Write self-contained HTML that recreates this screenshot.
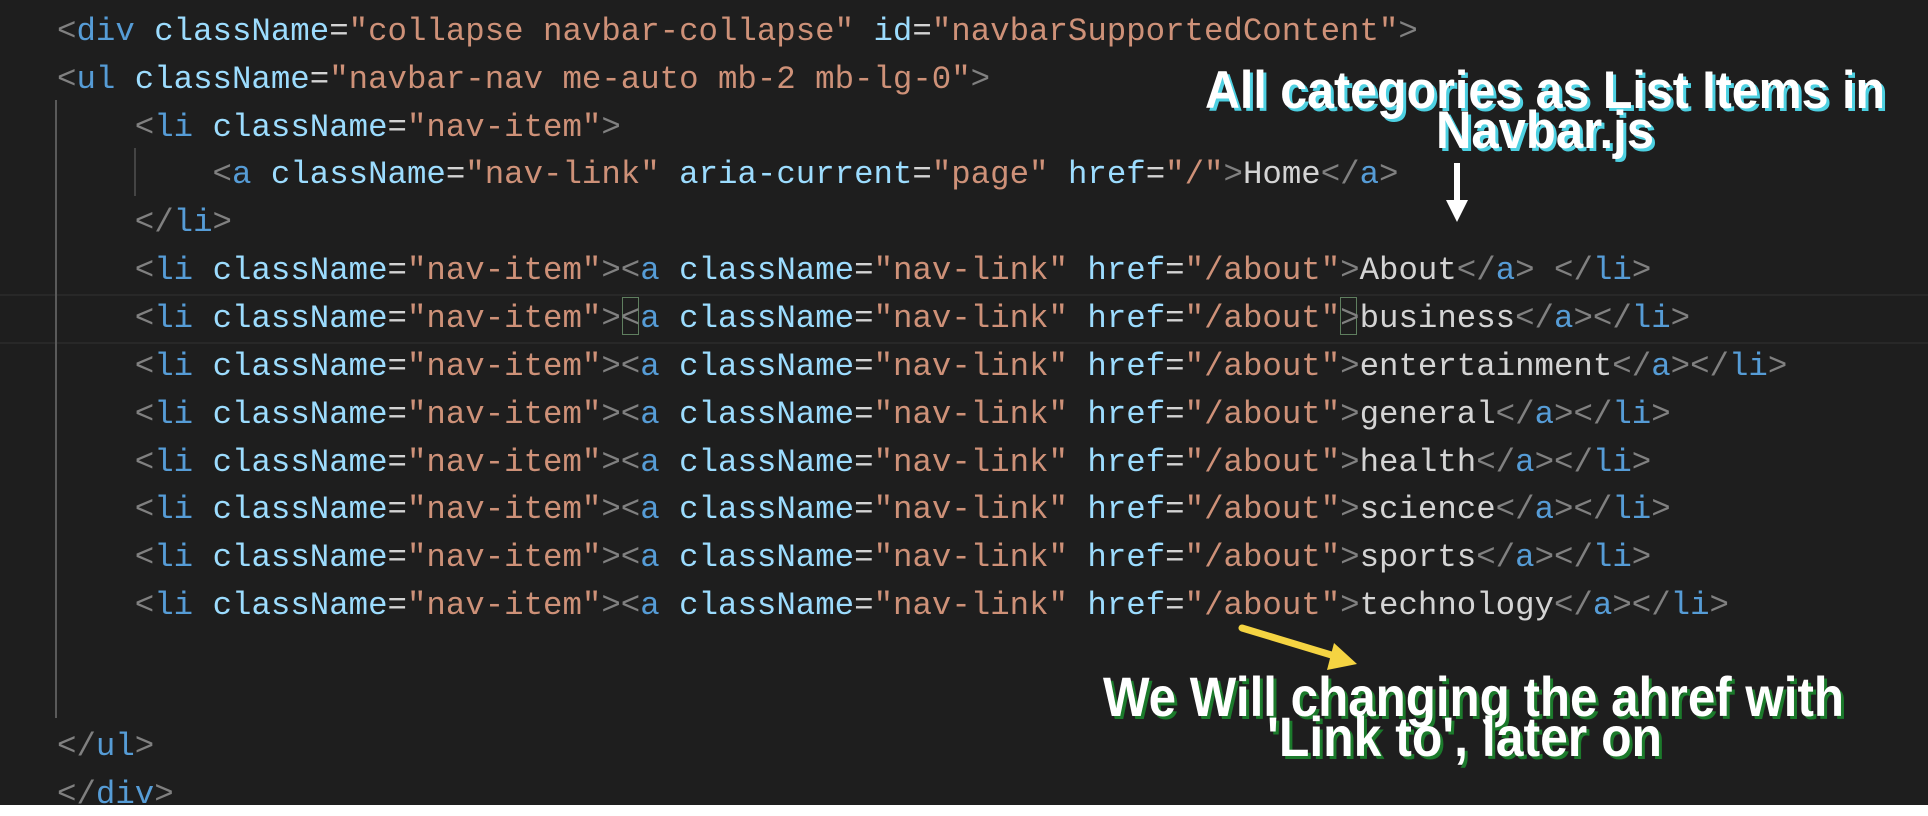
<!DOCTYPE html>
<html><head><meta charset="utf-8"><style>
html,body{margin:0;padding:0}
body{width:1928px;height:816px;background:#fff;position:relative;overflow:hidden}
#ed{position:absolute;left:0;top:0;width:1928px;height:805px;background:#1e1e1e;overflow:hidden}
.l{position:absolute;left:57px;height:48px;line-height:48px;font-family:"Liberation Mono",monospace;font-size:32.4px;white-space:pre;color:#d4d4d4;letter-spacing:0px}
.p{color:#808080}.t{color:#569cd6}.a{color:#9cdcfe}.s{color:#ce9178}.x{color:#d4d4d4}
.g{position:absolute;width:2px;background:#5a5a5a}
.cur{position:absolute;left:0;width:1928px;height:46px;border-top:2px solid #282828;border-bottom:2px solid #282828}
.bx{position:absolute;width:17px;height:38px;border:1px solid #5f7f5f;box-sizing:border-box}
svg{position:absolute;left:0;top:0}
</style></head><body>
<div id="ed">
<div class="cur" style="top:294px"></div>
<div class="g" style="left:55px;top:100px;height:618px"></div>
<div class="g" style="left:134px;top:148px;height:48px;background:#444"></div>
<div class="bx" style="left:622px;top:297px"></div>
<div class="bx" style="left:1340px;top:297px"></div>
<div class="l" style="top:8px"><span class="p">&lt;</span><span class="t">div</span> <span class="a">className</span><span class="x">=</span><span class="s">"collapse navbar-collapse"</span> <span class="a">id</span><span class="x">=</span><span class="s">"navbarSupportedContent"</span><span class="p">&gt;</span></div>
<div class="l" style="top:56px"><span class="p">&lt;</span><span class="t">ul</span> <span class="a">className</span><span class="x">=</span><span class="s">"navbar-nav me-auto mb-2 mb-lg-0"</span><span class="p">&gt;</span></div>
<div class="l" style="top:104px">    <span class="p">&lt;</span><span class="t">li</span> <span class="a">className</span><span class="x">=</span><span class="s">"nav-item"</span><span class="p">&gt;</span></div>
<div class="l" style="top:151px">        <span class="p">&lt;</span><span class="t">a</span> <span class="a">className</span><span class="x">=</span><span class="s">"nav-link"</span> <span class="a">aria-current</span><span class="x">=</span><span class="s">"page"</span> <span class="a">href</span><span class="x">=</span><span class="s">"/"</span><span class="p">&gt;</span>Home<span class="p">&lt;/</span><span class="t">a</span><span class="p">&gt;</span></div>
<div class="l" style="top:199px">    <span class="p">&lt;/</span><span class="t">li</span><span class="p">&gt;</span></div>
<div class="l" style="top:247px">    <span class="p">&lt;</span><span class="t">li</span> <span class="a">className</span><span class="x">=</span><span class="s">"nav-item"</span><span class="p">&gt;&lt;</span><span class="t">a</span> <span class="a">className</span><span class="x">=</span><span class="s">"nav-link"</span> <span class="a">href</span><span class="x">=</span><span class="s">"/about"</span><span class="p">&gt;</span>About<span class="p">&lt;/</span><span class="t">a</span><span class="p">&gt;</span> <span class="p">&lt;/</span><span class="t">li</span><span class="p">&gt;</span></div>
<div class="l" style="top:295px">    <span class="p">&lt;</span><span class="t">li</span> <span class="a">className</span><span class="x">=</span><span class="s">"nav-item"</span><span class="p">&gt;&lt;</span><span class="t">a</span> <span class="a">className</span><span class="x">=</span><span class="s">"nav-link"</span> <span class="a">href</span><span class="x">=</span><span class="s">"/about"</span><span class="p">&gt;</span>business<span class="p">&lt;/</span><span class="t">a</span><span class="p">&gt;&lt;/</span><span class="t">li</span><span class="p">&gt;</span></div>
<div class="l" style="top:343px">    <span class="p">&lt;</span><span class="t">li</span> <span class="a">className</span><span class="x">=</span><span class="s">"nav-item"</span><span class="p">&gt;&lt;</span><span class="t">a</span> <span class="a">className</span><span class="x">=</span><span class="s">"nav-link"</span> <span class="a">href</span><span class="x">=</span><span class="s">"/about"</span><span class="p">&gt;</span>entertainment<span class="p">&lt;/</span><span class="t">a</span><span class="p">&gt;&lt;/</span><span class="t">li</span><span class="p">&gt;</span></div>
<div class="l" style="top:391px">    <span class="p">&lt;</span><span class="t">li</span> <span class="a">className</span><span class="x">=</span><span class="s">"nav-item"</span><span class="p">&gt;&lt;</span><span class="t">a</span> <span class="a">className</span><span class="x">=</span><span class="s">"nav-link"</span> <span class="a">href</span><span class="x">=</span><span class="s">"/about"</span><span class="p">&gt;</span>general<span class="p">&lt;/</span><span class="t">a</span><span class="p">&gt;&lt;/</span><span class="t">li</span><span class="p">&gt;</span></div>
<div class="l" style="top:439px">    <span class="p">&lt;</span><span class="t">li</span> <span class="a">className</span><span class="x">=</span><span class="s">"nav-item"</span><span class="p">&gt;&lt;</span><span class="t">a</span> <span class="a">className</span><span class="x">=</span><span class="s">"nav-link"</span> <span class="a">href</span><span class="x">=</span><span class="s">"/about"</span><span class="p">&gt;</span>health<span class="p">&lt;/</span><span class="t">a</span><span class="p">&gt;&lt;/</span><span class="t">li</span><span class="p">&gt;</span></div>
<div class="l" style="top:486px">    <span class="p">&lt;</span><span class="t">li</span> <span class="a">className</span><span class="x">=</span><span class="s">"nav-item"</span><span class="p">&gt;&lt;</span><span class="t">a</span> <span class="a">className</span><span class="x">=</span><span class="s">"nav-link"</span> <span class="a">href</span><span class="x">=</span><span class="s">"/about"</span><span class="p">&gt;</span>science<span class="p">&lt;/</span><span class="t">a</span><span class="p">&gt;&lt;/</span><span class="t">li</span><span class="p">&gt;</span></div>
<div class="l" style="top:534px">    <span class="p">&lt;</span><span class="t">li</span> <span class="a">className</span><span class="x">=</span><span class="s">"nav-item"</span><span class="p">&gt;&lt;</span><span class="t">a</span> <span class="a">className</span><span class="x">=</span><span class="s">"nav-link"</span> <span class="a">href</span><span class="x">=</span><span class="s">"/about"</span><span class="p">&gt;</span>sports<span class="p">&lt;/</span><span class="t">a</span><span class="p">&gt;&lt;/</span><span class="t">li</span><span class="p">&gt;</span></div>
<div class="l" style="top:582px">    <span class="p">&lt;</span><span class="t">li</span> <span class="a">className</span><span class="x">=</span><span class="s">"nav-item"</span><span class="p">&gt;&lt;</span><span class="t">a</span> <span class="a">className</span><span class="x">=</span><span class="s">"nav-link"</span> <span class="a">href</span><span class="x">=</span><span class="s">"/about"</span><span class="p">&gt;</span>technology<span class="p">&lt;/</span><span class="t">a</span><span class="p">&gt;&lt;/</span><span class="t">li</span><span class="p">&gt;</span></div>
<div class="l" style="top:723px"><span class="p">&lt;/</span><span class="t">ul</span><span class="p">&gt;</span></div>
<div class="l" style="top:771px"><span class="p">&lt;/</span><span class="t">div</span><span class="p">&gt;</span></div>
<svg width="1928" height="805" viewBox="0 0 1928 805">
<g font-family="Liberation Sans, sans-serif" font-weight="bold">
<g font-size="53">
<text x="1208" y="111" textLength="680" lengthAdjust="spacingAndGlyphs" fill="#4dd0e1">All categories as List Items in</text>
<text x="1205" y="108" textLength="680" lengthAdjust="spacingAndGlyphs" fill="#fff">All categories as List Items in</text>
<text x="1439" y="151" textLength="218" lengthAdjust="spacingAndGlyphs" fill="#4dd0e1">Navbar.js</text>
<text x="1436" y="148" textLength="218" lengthAdjust="spacingAndGlyphs" fill="#fff">Navbar.js</text>
</g>
<g font-size="56">
<text x="1106" y="719" textLength="741" lengthAdjust="spacingAndGlyphs" fill="#1b7a2b">We Will changing the ahref with</text>
<text x="1103" y="716" textLength="741" lengthAdjust="spacingAndGlyphs" fill="#fff">We Will changing the ahref with</text>
<text x="1270" y="759" textLength="395" lengthAdjust="spacingAndGlyphs" fill="#1b7a2b">'Link to', later on</text>
<text x="1267" y="756" textLength="395" lengthAdjust="spacingAndGlyphs" fill="#fff">'Link to', later on</text>
</g>
</g>
<line x1="1457" y1="163" x2="1457" y2="206" stroke="#fff" stroke-width="6"/>
<polygon points="1446,200 1468,200 1457,222" fill="#fff"/>
<line x1="1242" y1="628" x2="1338" y2="657" stroke="#f5d442" stroke-width="7" stroke-linecap="round"/>
<polygon points="1334,643 1357,664 1327,670" fill="#f5d442"/>
</svg>
</div>
</body></html>
